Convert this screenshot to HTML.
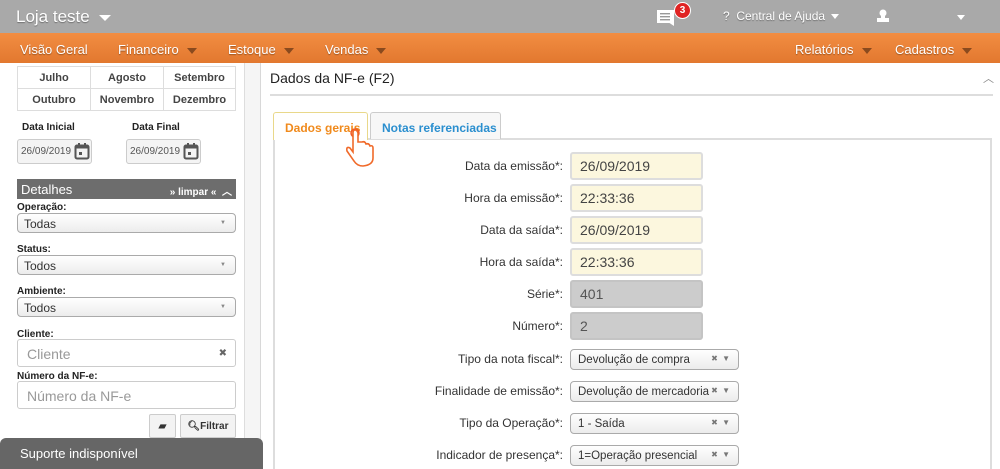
<!DOCTYPE html>
<html><head><meta charset="utf-8"><style>
*{box-sizing:border-box;margin:0;padding:0}
html,body{overflow:hidden}
body{width:1000px;height:469px;font-family:"Liberation Sans",Arial,sans-serif;background:#fff;position:relative;color:#333}
.a{position:absolute;white-space:nowrap}
.top{left:0;top:0;width:1000px;height:33px;background:#a9a9a9;color:#fff}
.nav{left:0;top:33px;width:1000px;height:30px;background:linear-gradient(#f28d42,#e2782f);color:#fff;font-size:13px}
.nav>span,.top>span{position:absolute;text-shadow:0 1px 1px rgba(0,0,0,.35)}
.tri{display:inline-block;width:0;height:0;border-left:5px solid transparent;border-right:5px solid transparent;border-top:6px solid #8a4a1e;margin-left:8px;vertical-align:middle}
.triw{display:inline-block;width:0;height:0;border-left:4px solid transparent;border-right:4px solid transparent;border-top:5px solid #fff;margin-left:6px;vertical-align:middle}
.side{left:0;top:63px;width:245px;height:406px;background:#fff;border-right:1px solid #ddd}
.strip{left:245px;top:63px;width:16px;height:406px;background:#f5f5f5;border-right:1px solid #d8d8d8}
.grid{left:17px;top:66px;width:219px;border:1px solid #ddd;border-top:none;font-size:11px;font-weight:bold;color:#444}
.grid td{border:1px solid #ddd;height:22px;text-align:center}
.lbl{font-size:10px;font-weight:bold;color:#222}
.di{height:25px;width:75px;border:1px solid #ccc;border-radius:3px;background:#f4f4f4;font-size:10px;color:#555;padding:6px 0 0 3px}
.sel{left:17px;width:219px;height:20px;border:1px solid #aaa;border-radius:4px;background:linear-gradient(#fff,#ececec);font-size:12px;padding:3px 0 0 6px;color:#333}
.sel:after{content:"▼";position:absolute;right:9px;top:6px;font-size:6px;color:#888}
.inp{left:17px;width:219px;height:28px;border:1px solid #ccc;border-radius:3px;font-size:14px;color:#999;padding:6px 0 0 9px}
.btn{height:24px;border:1px solid #ccc;border-radius:2px;background:#f3f3f3;font-size:10px;font-weight:bold;color:#333;text-align:center;padding-top:6px}
.sup{left:0;top:438px;width:263px;height:31px;background:#666;border-radius:6px 6px 0 0;color:#fff;font-size:13px;padding:8px 0 0 20px}
.fl{width:290px;left:273px;text-align:right;font-size:12px;color:#333}
.fi{left:570px;width:133px;height:28px;border:2px solid #ddd;border-radius:3px;background:#fcf7de;font-size:14px;color:#444;padding:4px 0 0 8px}
.fi.g{background:#ccc;border-color:#c4c4c4;color:#555}
.fs{left:570px;width:169px;height:21px;border:1px solid #aaa;border-radius:4px;background:linear-gradient(#fff,#ececec);font-size:11.5px;padding:4px 0 0 7px;color:#333}
.fs:after{content:"✖  ▼";position:absolute;right:7px;top:4px;font-size:8px;color:#777;letter-spacing:1px}
</style></head><body>
<div class="a top">
<span style="left:16px;top:7px;font-size:17px">Loja teste<span class="triw" style="margin-left:9px;border-width:6px 6px 0"></span></span>
<svg class="a" style="left:656px;top:9px" width="20" height="17"><rect x="1" y="1" width="17" height="13" fill="#fff"/><polygon points="12,13 18,13 18,17" fill="#fff"/><rect x="4" y="4" width="10" height="1.4" fill="#999"/><rect x="4" y="7" width="10" height="1.4" fill="#999"/><rect x="4" y="10" width="10" height="1.4" fill="#999"/></svg>
<div class="a" style="left:674px;top:2px;width:17px;height:17px;border-radius:50%;background:#e02323;border:1px solid #fff;color:#fff;font-size:10px;font-weight:bold;text-align:center;line-height:15px">3</div>
<span style="left:723px;top:9px;font-size:12px">? &nbsp;Central de Ajuda<span class="triw"></span></span>
<svg class="a" style="left:876px;top:9px" width="14" height="13"><circle cx="7" cy="4" r="3.5" fill="#fff"/><rect x="5" y="6" width="4" height="4" fill="#fff"/><rect x="1" y="9" width="12" height="4" fill="#fff"/></svg>
<span style="left:951px;top:9px"><span class="triw"></span></span>
</div>
<div class="a nav">
<span style="left:20px;top:9px">Visão Geral</span>
<span style="left:118px;top:9px">Financeiro<span class="tri"></span></span>
<span style="left:228px;top:9px">Estoque<span class="tri"></span></span>
<span style="left:325px;top:9px">Vendas<span class="tri"></span></span>
<span style="left:795px;top:9px">Relatórios<span class="tri"></span></span>
<span style="left:895px;top:9px">Cadastros<span class="tri"></span></span>
</div>
<div class="a side"></div><div class="a strip"></div>
<table class="a grid" style="border-collapse:collapse"><tr><td style="width:73px">Julho</td><td style="width:73px">Agosto</td><td>Setembro</td></tr><tr><td>Outubro</td><td>Novembro</td><td>Dezembro</td></tr></table>
<div class="a lbl" style="left:22px;top:122px">Data Inicial</div>
<div class="a lbl" style="left:132px;top:122px">Data Final</div>
<div class="a di" style="left:17px;top:139px">26/09/2019</div>
<div class="a di" style="left:126px;top:139px">26/09/2019</div>
<svg class="a" style="left:74px;top:142px" width="16" height="18"><rect x="1.5" y="3.5" width="13" height="13" rx="1.5" fill="none" stroke="#555" stroke-width="2"/><rect x="1.5" y="3.5" width="13" height="3" fill="#555"/><rect x="4" y="1" width="2" height="4" fill="#555"/><rect x="10" y="1" width="2" height="4" fill="#555"/><rect x="5" y="10" width="3" height="3" fill="#555"/></svg>
<svg class="a" style="left:183px;top:142px" width="16" height="18"><rect x="1.5" y="3.5" width="13" height="13" rx="1.5" fill="none" stroke="#555" stroke-width="2"/><rect x="1.5" y="3.5" width="13" height="3" fill="#555"/><rect x="4" y="1" width="2" height="4" fill="#555"/><rect x="10" y="1" width="2" height="4" fill="#555"/><rect x="5" y="10" width="3" height="3" fill="#555"/></svg>
<div class="a" style="left:17px;top:179px;width:219px;height:20px;background:#6d6d6d;color:#fff;font-size:13px;padding:3px 0 0 4px">Detalhes<span style="position:absolute;right:4px;top:4px;font-size:10px;font-weight:bold">» limpar « &nbsp;︿</span></div>
<div class="a lbl" style="left:17px;top:202px">Operação:</div>
<div class="a sel" style="top:213px">Todas</div>
<div class="a lbl" style="left:17px;top:244px">Status:</div>
<div class="a sel" style="top:255px">Todos</div>
<div class="a lbl" style="left:17px;top:286px">Ambiente:</div>
<div class="a sel" style="top:297px">Todos</div>
<div class="a lbl" style="left:17px;top:329px">Cliente:</div>
<div class="a inp" style="top:339px">Cliente<span style="position:absolute;right:8px;top:8px;font-size:10px;color:#666">✖</span></div>
<div class="a lbl" style="left:17px;top:371px">Número da NF-e:</div>
<div class="a inp" style="top:381px">Número da NF-e</div>
<div class="a btn" style="left:149px;top:414px;width:27px">▰</div>
<div class="a btn" style="left:180px;top:414px;width:56px">🔍︎Filtrar</div>
<div class="a sup">Suporte indisponível</div>

<div class="a" style="left:270px;top:70px;font-size:14px;color:#222">Dados da NF-e (F2)</div>
<div class="a" style="left:983px;top:70px;font-size:11px;color:#888">︿</div>
<div class="a" style="left:270px;top:94px;width:723px;height:2px;background:#ddd"></div>
<div class="a" style="left:273px;top:138px;width:719px;height:340px;border:2px solid #ddd"></div>
<div class="a" style="left:273px;top:112px;width:95px;height:28px;border:1px solid #e9d88a;border-bottom:none;border-radius:3px 3px 0 0;background:#fff;color:#f08a1c;font-size:12px;font-weight:bold;padding:8px 0 0 11px">Dados gerais</div>
<div class="a" style="left:370px;top:112px;width:131px;height:27px;border:1px solid #ccc;border-bottom:none;border-radius:3px 3px 0 0;background:#f7f7f7;color:#2b8fcf;font-size:12px;font-weight:bold;padding:8px 0 0 11px">Notas referenciadas</div>
<svg class="a" style="left:343px;top:128px" width="34" height="42"><circle cx="12" cy="5" r="4" fill="#f7b89a" stroke="#f15a24" stroke-width="1.5"/><path d="M10 5 L10 24 L7 20 Q3 18 4 23 L11 33 Q14 38 20 38 Q30 37 30 30 L30 20 Q30 17 27 18 Q26 15 23 16 Q22 13 19 14 L15 14 L15 5 Q14 2 12 2 Q10 2 10 5Z" fill="#fff" stroke="#f06a2a" stroke-width="1.6"/></svg>

<div class="a fl" style="top:159px">Data da emissão*:</div><div class="a fi" style="top:152px">26/09/2019</div>
<div class="a fl" style="top:191px">Hora da emissão*:</div><div class="a fi" style="top:184px">22:33:36</div>
<div class="a fl" style="top:223px">Data da saída*:</div><div class="a fi" style="top:216px">26/09/2019</div>
<div class="a fl" style="top:255px">Hora da saída*:</div><div class="a fi" style="top:248px">22:33:36</div>
<div class="a fl" style="top:287px">Série*:</div><div class="a fi g" style="top:280px">401</div>
<div class="a fl" style="top:319px">Número*:</div><div class="a fi g" style="top:312px">2</div>
<div class="a fl" style="top:352px">Tipo da nota fiscal*:</div><div class="a fs" style="top:349px">Devolução de compra</div>
<div class="a fl" style="top:384px">Finalidade de emissão*:</div><div class="a fs" style="top:381px">Devolução de mercadoria</div>
<div class="a fl" style="top:416px">Tipo da Operação*:</div><div class="a fs" style="top:413px">1 - Saída</div>
<div class="a fl" style="top:448px">Indicador de presença*:</div><div class="a fs" style="top:445px">1=Operação presencial</div>
</body></html>
